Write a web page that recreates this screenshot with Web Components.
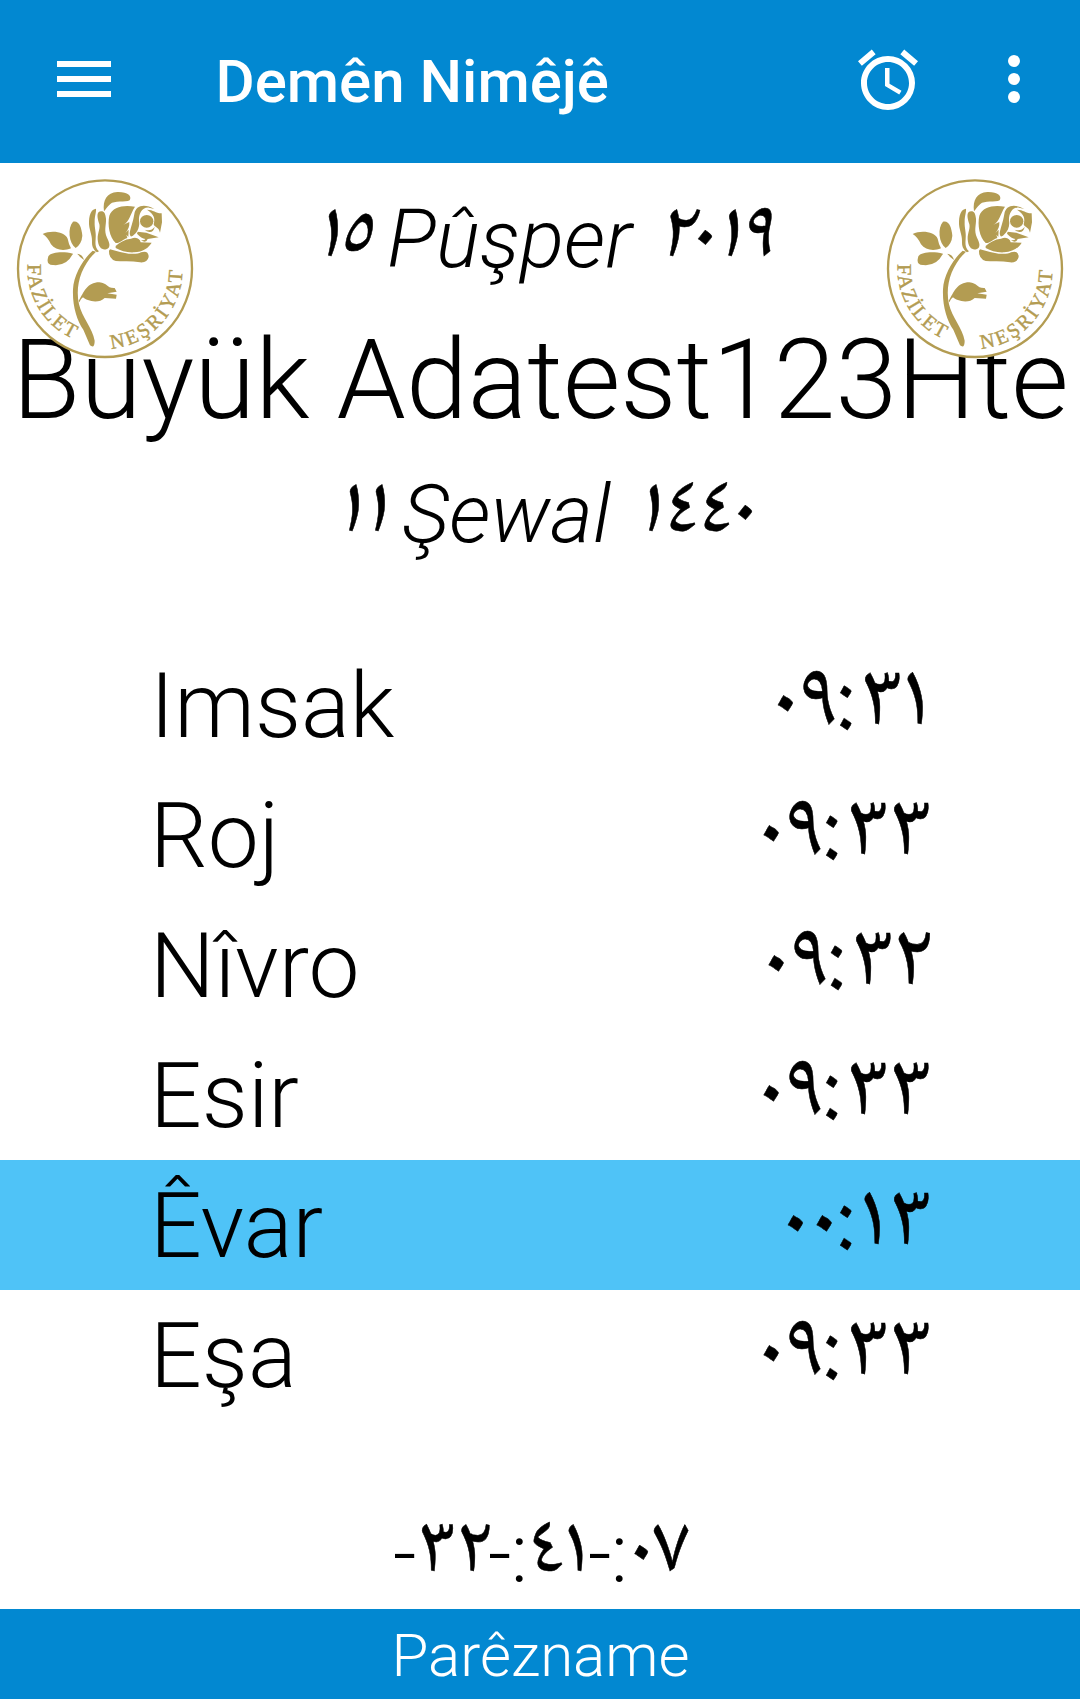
<!DOCTYPE html>
<html lang="ku"><head><meta charset="utf-8"><title>Demên Nimêjê</title>
<style>html,body{margin:0;background:#fff}body{width:1080px;height:1699px;overflow:hidden;font-family:Roboto,sans-serif;font-weight:300;color:#000}</style></head>
<body>
<prayer-app></prayer-app>
<script>
const define=(name,html,setup)=>customElements.define(name,class extends HTMLElement{
  constructor(){super();this.attachShadow({mode:'open'}).innerHTML=html}
  connectedCallback(){if(setup)setup(this)}
});
/* Arabic-Indic digits are set proportionally: each entry of xs is the left edge of one glyph's ink. */
const pen=document.createElement('canvas').getContext('2d');
const NASKH='"Noto Naskh Arabic","DejaVu Sans",sans-serif', LATIN='Roboto,sans-serif';
function inkRun(str,xs,y,size,latinMarks){
  const groups=[];
  [...str].forEach((c,i)=>{
    const latin=!!latinMarks&&(c==='-'||c===':');
    const font=`${latin?300:400} ${size}px ${latin?LATIN:NASKH}`;
    pen.font=font;
    const x=(xs[i]+pen.measureText(c).actualBoundingBoxLeft).toFixed(2);
    let g=groups[groups.length-1];
    if(!g||g.latin!==latin)groups.push(g={latin,font,t:'',x:[]});
    g.t+=c;g.x.push(x);
  });
  return groups.map(g=>`<tspan x="${g.x.join(' ')}" y="${g.latin?y+11:y}" style='font:${g.font}'${g.latin?'':' stroke="#000" stroke-width=".5"'}>${g.t}</tspan>`).join('');
}
/* How far the slant moves the left edge of each digit. */
const SLANT={'١':9.8,'٢':9.8,'٩':9.3,'٠':5,'٥':3.5,'٤':6.5};
const slanted=(str,xs)=>`<text transform="translate(0 64) skewX(-14)">${inkRun(str,xs.split(',').map((v,i)=>+v-SLANT[[...str][i]]),0,82)}</text>`;
define('app-header',`<style>
:host{display:flex;align-items:center;height:163px;background:#0288d1;color:#fff;box-sizing:border-box}
svg{display:block;fill:#fff;margin-bottom:5px}
.menu{margin-left:48px}h1{font:500 60px/70px Roboto,sans-serif;margin:0 0 0 95.5px;padding-top:1px;flex:1;white-space:nowrap}
.alarm{margin-right:54px;margin-bottom:3px}.more{margin-right:30px}
</style><svg class="menu" width="72" height="72" viewBox="0 0 24 24"><path d="M3 18h18v-2H3v2zm0-5h18v-2H3v2zm0-7v2h18V6H3z"/></svg><h1><slot></slot></h1>
<svg class="alarm" width="72" height="72" viewBox="0 0 24 24"><path d="M22 5.72l-4.6-3.86-1.29 1.53 4.6 3.86L22 5.72zM7.88 3.39L6.6 1.86 2 5.71l1.29 1.53 4.59-3.85zM12.5 8H11v6l4.75 2.85.75-1.23-4-2.37V8zM12 4c-4.97 0-9 4.03-9 9s4.02 9 9 9a9 9 0 000-18zm0 16c-3.87 0-7-3.13-7-7s3.13-7 7-7 7 3.13 7 7-3.13 7-7 7z"/></svg>
<svg class="more" width="72" height="72" viewBox="0 0 24 24"><path d="M12 8a2 2 0 100-4 2 2 0 000 4zm0 2a2 2 0 100 4 2 2 0 000-4zm0 6a2 2 0 100 4 2 2 0 000-4z"/></svg>`);
define('publisher-logo',`<style>:host{display:block;width:178px;height:181px}svg{display:block}text{font-family:"Liberation Serif",serif;font-size:61px;fill:#b39c52;stroke:#b39c52;stroke-width:1.2;font-weight:400}</style>
<svg width="178" height="181" viewBox="48 38 534 543"><ellipse cx="315" cy="310" rx="261" ry="265" fill="#fff" stroke="#b39c52" stroke-width="7"/>
<g fill="#b39c52">
<path d="M312 138C308 104 320 82 352 80C382 79 397 92 389 105C377 112 342 105 331 116C321 124 319 131 312 138Z"/>
<path d="M288 130C268 132 265 163 268 185C272 205 277 213 276 232C276 247 283 254 291 261L297 258C283 245 287 230 287 218C289 200 283 188 284 169C284 151 289 141 288 130Z"/>
<path d="M304 138C288 138 292 157 296 171C304 188 292 201 293 222C295 247 306 255 319 252C334 246 328 231 321 217C311 194 319 180 318 160C316 145 313 138 304 138Z"/>
<path d="M405 124C373 118 338 123 328 151C322 178 328 215 347 233C358 235 370 221 382 218L379 208L385 215L386 193L376 203C385 192 389 184 388 170L370 178C389 169 390 147 405 124Z"/>
<path d="M403 146C407 120 433 114 463 131L447 127C425 125 416 147 417 166C420 181 414 199 401 209C393 217 390 213 389 204C391 189 399 172 403 146Z"/>
<ellipse cx="440" cy="168" rx="20" ry="19"/>
<path d="M441 133C461 133 468 145 485 144L486 171L480 202C475 183 465 188 461 177C466 160 463 148 441 133Z"/>
<path d="M434 193Q454 199 464 184Q461 201 448 200Q440 199 434 193Z"/>
<path d="M413 199L439 202L476 216L443 221Q438 236 422 224Q433 226 436 221Q424 219 411 205Z"/>
<path d="M347 242C361 230 374 222 393 220C411 213 420 222 422 231L455 232C446 247 429 260 402 261C380 262 363 257 347 248Z"/>
<path d="M330 252Q355 260 386 265Q413 267 423 261Q446 254 446 275Q442 293 420 291Q393 286 362 288Q326 289 327 256Z"/>
<path d="M128 206C153 193 195 199 203 220Q206 236 213 249C190 258 166 254 153 237Q143 215 128 206Z"/><path d="M219 169C238 165 244 186 247 211Q245 236 227 248C206 233 202 187 219 169Z"/><path d="M219 265C187 257 145 261 144 277Q138 300 160 299Q200 303 219 265Z"/>
<path d="M232 265Q247 267 252 284Q239 276 232 265Z"/>
<path d="M278 256C251 280 221 327 219 372C217 421 230 463 250 493L270 540Q284 551 284 526C278 490 245 454 237 417C225 363 242 303 288 259Z"/>
<path d="M236 407C252 380 261 351 298 351C323 353 319 369 344 368L350 379L322 384L350 388L348 400L314 398C297 416 259 407 249 396Q241 401 238 411Z"/></g>
<path id="a" d="M83 296A232 232 0 0 0 315 541" fill="none"/><path id="b" d="M334 550A233 238 0 0 0 546 290" fill="none"/>
<text><textPath href="#a" textLength="278">FAZİLET</textPath></text><text><textPath href="#b" textLength="346">NEŞRİYAT</textPath></text></svg>`);
define('date-line',`<style>:host{display:block;height:94px}svg{display:block;overflow:visible}text{direction:ltr;unicode-bidi:bidi-override}.m{font:italic 300 82px Roboto,sans-serif}</style><svg width="1080" height="94"></svg>`,el=>{
  const {day,dx,month,mx,year,yx}=el.dataset;
  el.shadowRoot.querySelector('svg').innerHTML=`${slanted(day,dx)}<text class="m" x="${mx}" y="75">${month}</text>${slanted(year,yx)}`;
});
define('city-name',`<style>:host{display:block;font-size:111px;line-height:130px;white-space:nowrap;text-align:center;padding-left:1px}</style><slot></slot>`);
define('prayer-row',`<style>:host{display:flex;justify-content:space-between;align-items:center;height:130px;padding:0 150px 0 150px;box-sizing:border-box;font-size:91px;line-height:128px}span{padding-top:2px}
:host([active]){background:#4fc3f7}svg{display:block;overflow:visible}text{direction:ltr;unicode-bidi:bidi-override}</style><span><slot></slot></span><svg width="180" height="130"></svg>`,el=>{
  el.shadowRoot.querySelector('svg').innerHTML=`<text>${inkRun(el.dataset.time,el.dataset.x.split(',').map(v=>+v-750.3),84,91)}</text>`;
});
define('count-down',`<style>:host{display:flex;justify-content:center}svg{display:block;overflow:visible}text{direction:ltr;unicode-bidi:bidi-override}</style><svg width="300" height="120"></svg>`,el=>{
  el.shadowRoot.querySelector('svg').innerHTML=`<text>${inkRun(el.dataset.value,[5,32,71,100,125.7,143,178,200,225.7,244,263.3],82,82,true)}</text>`;
});
define('app-footer',`<style>:host{display:block;height:90px;background:#0288d1;color:#fff;font-size:60px;line-height:94px;text-align:center;padding-left:1px}</style><slot></slot>`);
define('prayer-app',`<style>:host{display:flex;flex-direction:column;height:1699px;position:relative}
publisher-logo{position:absolute;top:178px;left:16px}publisher-logo.r{left:886px}
.top{height:477px;display:flex;flex-direction:column;padding-top:29px;box-sizing:border-box}city-name{margin:29px 0 22px}count-down{padding-top:69px;flex:1}</style>
<app-header>Demên Nimêjê</app-header><div class="top"><date-line data-day="١٥" data-dx="328,345.7" data-month="Pûşper" data-mx="387" data-year="٢٠١٩" data-yx="670,698.3,728.3,750"></date-line><city-name>Büyük Adatest123Hte</city-name><date-line data-day="١١" data-dx="349,375" data-month="Şewal" data-mx="402" data-year="١٤٤٠" data-yx="649,670.7,704.7,738.3"></date-line></div>
<prayer-row data-time="٠٩:٣١" data-x="778.3,803.7,843.3,865,908">Imsak</prayer-row><prayer-row data-time="٠٩:٣٣" data-x="764,789.7,829.3,851,894">Roj</prayer-row><prayer-row data-time="٠٩:٣٢" data-x="769,794.7,834,856,899">Nîvro</prayer-row><prayer-row data-time="٠٩:٣٣" data-x="764,789.7,829.3,851,894">Esir</prayer-row><prayer-row active data-time="٠٠:١٣" data-x="788.3,817,843.3,865,894">Êvar</prayer-row><prayer-row data-time="٠٩:٣٣" data-x="764,789.7,829.3,851,894">Eşa</prayer-row>
<count-down data-value="-٣٢-:٤١-:٠٧"></count-down><app-footer>Parêzname</app-footer><publisher-logo></publisher-logo><publisher-logo class="r"></publisher-logo>`);
</script></body></html>
